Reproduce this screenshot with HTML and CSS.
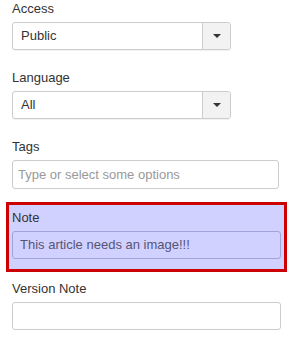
FILE: index.html
```html
<!DOCTYPE html>
<html lang="en">
<head>
  <meta charset="UTF-8">
  <title>Article options</title>
  <link rel="stylesheet" href="styles.css">
</head>
<body>
  <div class="form">
    <div class="field">
      <label class="field-label">Access</label>
      <div class="select">
        <span class="select-value">Public</span>
        <span class="select-btn"><span class="caret"></span></span>
      </div>
    </div>

    <div class="field">
      <label class="field-label">Language</label>
      <div class="select">
        <span class="select-value">All</span>
        <span class="select-btn"><span class="caret"></span></span>
      </div>
    </div>

    <div class="field">
      <label class="field-label">Tags</label>
      <div class="input input-tags placeholder">Type or select some options</div>
    </div>

    <div class="field field-note">
      <label class="field-label">Note</label>
      <div class="input input-note">This article needs an image!!!</div>
    </div>

    <div class="field">
      <label class="field-label">Version Note</label>
      <div class="input"></div>
    </div>
  </div>
</body>
</html>
```

FILE: styles.css
```css
html, body {
  margin: 0;
  padding: 0;
  background-color: #ffffff;
  color: #333333;
  font-family: 'Liberation Sans', Arial, Helvetica, sans-serif;
  font-size: 13px;
  line-height: 18px;
}

.form {
  padding: 0 12px;
}

.field {
  margin-bottom: 19px;
}

.field-label {
  display: block;
  margin-bottom: 4px;
}

.select {
  display: flex;
  width: 219px;
  height: 28px;
  box-sizing: border-box;
  border: 1px solid #cccccc;
  border-radius: 3px;
  box-shadow: 0 1px 1px rgba(0, 0, 0, 0.06);
}

.select-value {
  flex: 1;
  padding: 4px 8px;
}

.select-btn {
  width: 27px;
  display: flex;
  align-items: center;
  justify-content: center;
  background-color: #f2f2f2;
  border-left: 1px solid #cccccc;
  border-radius: 0 3px 3px 0;
}

.caret {
  width: 0;
  height: 0;
  border-left: 4px solid transparent;
  border-right: 4px solid transparent;
  border-top: 4px solid #333333;
}

.input {
  width: 269px;
  height: 28px;
  box-sizing: border-box;
  border: 1px solid #cccccc;
  border-radius: 3px;
  padding: 4px 7px;
}

.input-tags {
  width: 267px;
  height: 29px;
  padding: 5px 5px;
}

.placeholder {
  color: #999999;
}

.field-note {
  margin: 0 -6px 8px;
  padding: 4px 3px 0 3px;
  height: 60px;
  border: 3px solid #cc0000;
  background-color: #d1d1ff;
  margin-top: -6px;
}

.input-note {
  margin-top: 3px;
  border-color: #a3a3db;
  color: #555577;
}
```
